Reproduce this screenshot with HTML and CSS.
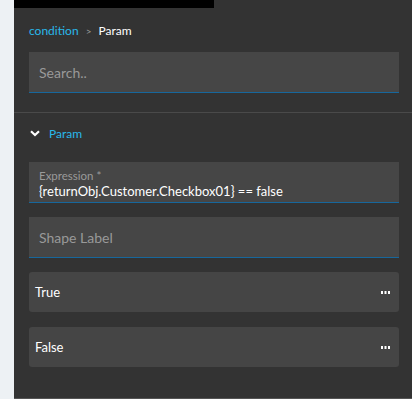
FILE: index.html
```html
<!doctype html>
<html lang="en">
<head>
    <meta charset="UTF-8">
    <title>Param</title>
    <link rel="stylesheet" href="styles.css">
</head>
<body>
    <div class="panel">
        <div class="topbar"></div>
        <div class="crumbs">
            <a class="crumb-link">condition</a>
            <span class="crumb-sep">&gt;</span>
            <span class="crumb-current">Param</span>
        </div>
        <div class="search">
            <input type="text" placeholder="Search..">
        </div>
        <div class="section">
            <div class="section-head">
                <svg width="10" height="7" viewBox="0 0 10 7"><path d="M1 1.2 L5 5 L9 1.2" fill="none" stroke="#fff" stroke-width="2.2"/></svg>
                <span>Param</span>
            </div>
            <div class="field filled">
                <label>Expression *</label>
                <div class="value">{returnObj.Customer.Checkbox01} == false</div>
            </div>
            <div class="field">
                <input type="text" placeholder="Shape Label">
            </div>
            <div class="branch">
                <span>True</span>
                <svg width="10" height="3" viewBox="0 0 10 3"><rect x="0" y="0" width="2" height="3" fill="#fff"/><rect x="3.5" y="0" width="2" height="3" fill="#fff"/><rect x="7" y="0" width="2" height="3" fill="#fff"/></svg>
            </div>
            <div class="branch">
                <span>False</span>
                <svg width="10" height="3" viewBox="0 0 10 3"><rect x="0" y="0" width="2" height="3" fill="#fff"/><rect x="3.5" y="0" width="2" height="3" fill="#fff"/><rect x="7" y="0" width="2" height="3" fill="#fff"/></svg>
            </div>
        </div>
    </div>
</body>
</html>
```

FILE: styles.css
```css
body{
    margin: 0;
    background: #edf1f4;
    font-family: Lato, "Open Sans", sans-serif;
    display: flex;
}
.panel{
    margin-left: 14px;
    flex: 1;
    height: 398px;
    background: #333333;
    border-bottom: 1px solid #555555;
}
.topbar{
    width: 200px;
    height: 8px;
    background: #000;
}
.crumbs{
    padding: 16px 15px 0 15px;
    height: 28px;
    font-size: 12px;
    line-height: 14px;
}
.crumb-link{
    color: #29b8ea;
}
.crumb-sep{
    color: #9a9a9a;
    font-size: 10px;
    margin: 0 4px;
}
.crumb-current{
    color: #fff;
}
.search{
    margin: 0 13px 0 15px;
    background: #464646;
    border-bottom: 1px solid #17679c;
    height: 40px;
}
input{
    width: 100%;
    height: 100%;
    box-sizing: border-box;
    background: transparent;
    border: none;
    outline: none;
    padding: 0 10px;
    font-family: Lato, "Open Sans", sans-serif;
    font-size: 14px;
    color: #fff;
}
input::placeholder{
    color: #999999;
}
.section{
    margin-top: 19px;
    border-top: 1px solid #4a4a4a;
    padding: 0 13px 0 15px;
}
.section-head{
    display: flex;
    align-items: center;
    gap: 9px;
    height: 40px;
    padding-left: 1px;
    color: #29b8ea;
    font-size: 12px;
}
.field{
    background: #464646;
    border-bottom: 1px solid #17679c;
    height: 40px;
    margin-top: 10px;
}
.field.filled{
    height: 41px;
    box-sizing: border-box;
    padding: 7px 10px 0 10px;
    margin-top: 9px;
}
.field.filled label{
    display: block;
    color: #9a9a9a;
    font-size: 11.5px;
    line-height: 14px;
}
.field.filled .value{
    color: #fff;
    font-size: 13px;
    line-height: 17px;
}
.field + .field{
    margin-top: 14px;
}
.branch{
    display: flex;
    align-items: center;
    justify-content: space-between;
    height: 40px;
    margin-top: 14px;
    padding: 0 8px 0 6px;
    background: #454545;
    border-radius: 3px;
    color: #fff;
    font-size: 13px;
}
.branch + .branch{
    margin-top: 15px;
}
```
